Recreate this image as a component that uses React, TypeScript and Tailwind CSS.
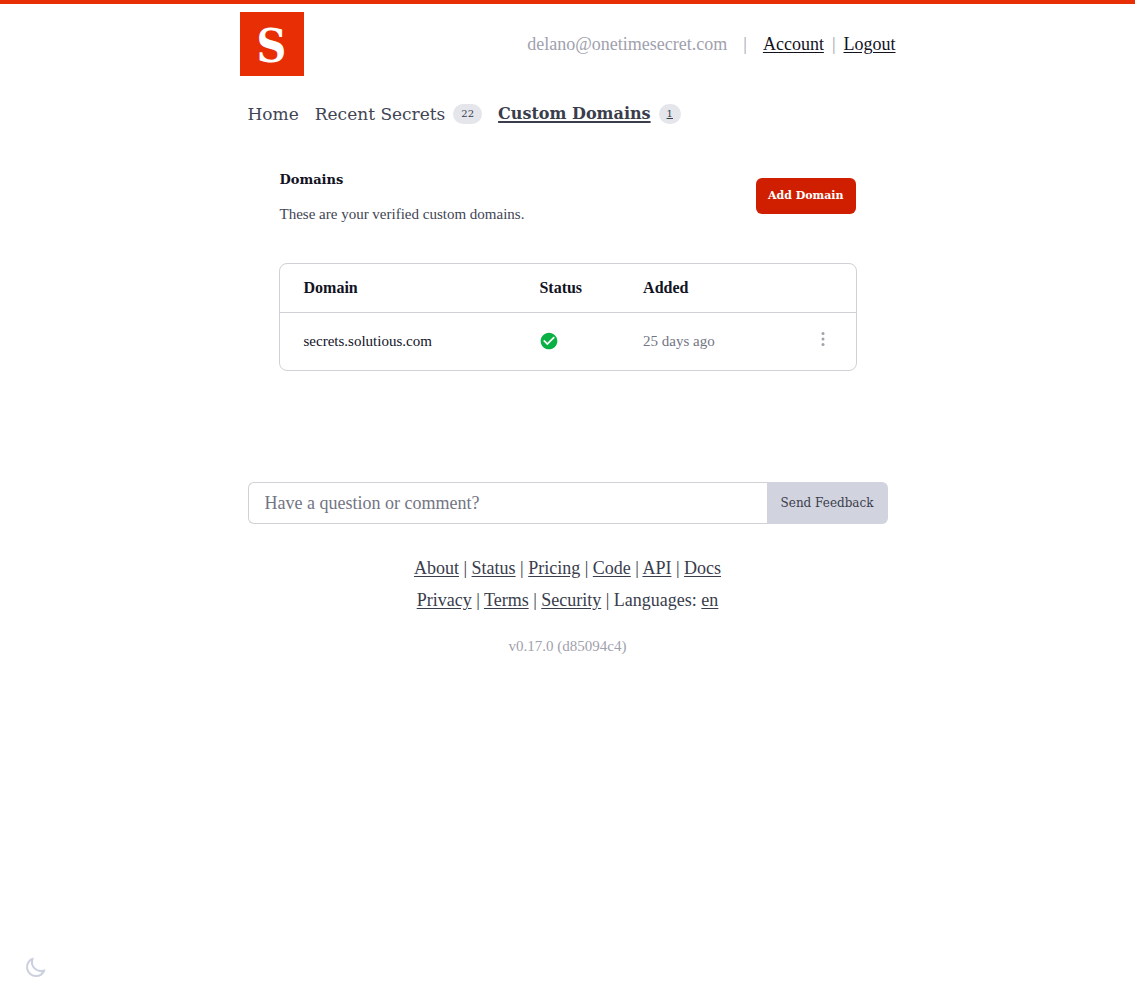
import React from "react";

const serif = "font-['Liberation_Serif',serif]";
const slab = "font-['DejaVu_Serif',serif]";
const narrowSlab = "font-['DejaVu_Serif_Condensed','DejaVu_Serif',serif]";

type Item = { label: string; href: string };

const primaryLinks: Item[] = [
  { label: "About", href: "#about" },
  { label: "Status", href: "#status" },
  { label: "Pricing", href: "#pricing" },
  { label: "Code", href: "#code" },
  { label: "API", href: "#api" },
  { label: "Docs", href: "#docs" },
];

const legalLinks: Item[] = [
  { label: "Privacy", href: "#privacy" },
  { label: "Terms", href: "#terms" },
  { label: "Security", href: "#security" },
];

const domains = [{ name: "secrets.solutious.com", added: "25 days ago" }];

function Logo() {
  return (
    <a
      href="#home"
      aria-label="Onetime Secret"
      className={`flex size-16 items-center justify-center bg-[#e82e05] pt-1 text-[46px] leading-none font-bold text-white ${narrowSlab}`}
    >
      S
    </a>
  );
}

function Header() {
  return (
    <header className="flex items-center justify-between">
      <Logo />
      <div className="flex items-center text-lg text-[#9fa1ad]">
        <span>delano@onetimesecret.com</span>
        <span className="mx-4">|</span>
        <a href="#account" className="text-[#12131f] underline underline-offset-2">
          Account
        </a>
        <span className="mx-2">|</span>
        <a href="#logout" className="text-[#12131f] underline underline-offset-2">
          Logout
        </a>
      </div>
    </header>
  );
}

function Badge({ children }: { children: React.ReactNode }) {
  return (
    <span className={`rounded-full bg-[#e5e6eb] px-2 text-[10px] leading-5 text-[#393d4c] ${slab}`}>
      {children}
    </span>
  );
}

function Nav() {
  return (
    <nav className={`mt-6 flex items-center gap-4 px-2 text-[17px] leading-7 text-[#414554] ${slab}`}>
      <a href="#home">Home</a>
      <a href="#recent" className="flex items-center gap-2">
        Recent Secrets <Badge>22</Badge>
      </a>
      <a href="#domains" aria-current="page" className="flex items-center gap-2 text-base leading-7 text-[#393d4c]">
        <span className="font-bold underline decoration-2 underline-offset-2">Custom Domains</span>
        <Badge>
          <span className="underline">1</span>
        </Badge>
      </a>
    </nav>
  );
}

function DomainsTable() {
  return (
    <div className="-mx-px mt-[35px] overflow-hidden rounded-lg border border-[#d0d1d6]">
      <table className="w-full table-fixed text-left text-base">
        <colgroup>
          <col className="w-[42%]" />
          <col className="w-[18%]" />
          <col className="w-[27%]" />
          <col />
        </colgroup>
        <thead>
          <tr className="h-12 border-b border-[#d0d1d6] text-[#12131f]">
            <th scope="col" className="pl-6">Domain</th>
            <th scope="col" className="pl-[18px]">Status</th>
            <th scope="col" className="pl-[18px]">Added</th>
            <th scope="col" aria-label="Actions" />
          </tr>
        </thead>
        <tbody>
          {domains.map((d) => (
            <tr key={d.name} className="h-[58px] text-[15px]">
              <td className="pl-6 text-[#12131f]">{d.name}</td>
              <td className="pl-[18px]">
                <svg viewBox="0 0 24 24" className="size-5" role="img" aria-label="Verified">
                  <path
                    fill="#09b043"
                    d="M12 2C6.5 2 2 6.5 2 12s4.500 10 10 10 10-4.500 10-10S17.500 2 12 2m-2 15-5-5 1.410-1.410L10 14.170l7.590-7.590L19 8z"
                  />
                </svg>
              </td>
              <td className="pl-[18px] text-[#737584]">{d.added}</td>
              <td>
                <button type="button" aria-label="Domain options" className="mb-1 ml-8 flex size-5 items-center justify-center align-middle">
                  <svg viewBox="0 0 20 20" fill="#9fa1ad" className="size-5">
                    <circle cx="10" cy="4.500" r="1.500" />
                    <circle cx="10" cy="10" r="1.500" />
                    <circle cx="10" cy="15.500" r="1.500" />
                  </svg>
                </button>
              </td>
            </tr>
          ))}
        </tbody>
      </table>
    </div>
  );
}

function Links({ items }: { items: Item[] }) {
  return (
    <>
      {items.map((item, i) => (
        <React.Fragment key={item.label}>
          {i > 0 && " | "}
          <a href={item.href} className="underline underline-offset-2">
            {item.label}
          </a>
        </React.Fragment>
      ))}
    </>
  );
}

export default function App() {
  return (
    <div className={`min-h-screen border-t-4 border-[#e82e05] bg-white ${serif}`}>
      <div className="mx-auto max-w-2xl p-2">
        <Header />
        <Nav />
        <main className="px-10 pt-10">
          <div className="flex items-start justify-between">
            <div>
              <h1 className={`text-[13px] leading-6 font-bold text-[#12131f] ${slab}`}>Domains</h1>
              <p className="mt-2 text-[15px] leading-7 text-[#414554]">These are your verified custom domains.</p>
            </div>
            <button type="button" className={`mt-2.5 h-9 rounded-md bg-[#cf1f00] px-3 text-[11px] font-bold text-white ${slab}`}>
              Add Domain
            </button>
          </div>
          <DomainsTable />
        </main>
        <footer className="mt-[111px] px-2 text-center text-lg text-[#393d4c]">
          <form className="flex h-[42px]" onSubmit={(e) => e.preventDefault()}>
            <input
              type="text"
              aria-label="Feedback"
              placeholder="Have a question or comment?"
              className="min-w-0 flex-1 rounded-l-md border border-r-0 border-[#d0d1d6] px-4 placeholder:text-[#737584]"
            />
            <button type="submit" className={`rounded-r-md bg-[#d1d3de] px-3.5 text-xs ${slab}`}>
              Send Feedback
            </button>
          </form>
          <div className="mt-7 leading-8">
            <div>
              <Links items={primaryLinks} />
            </div>
            <div>
              <Links items={legalLinks} /> | Languages:{" "}
              <a href="#en" className="underline underline-offset-2">en</a>
            </div>
          </div>
          <p className="mt-[18px] text-[15px] leading-6 text-[#9fa1ad]">v0.17.0 (d85094c4)</p>
        </footer>
      </div>
      <button type="button" aria-label="Switch to dark mode" className="fixed bottom-6 left-6 text-[#cbd0df]">
        <svg viewBox="0 0 24 24" fill="none" stroke="currentColor" strokeWidth="2" strokeLinecap="round" strokeLinejoin="round" className="size-6">
          <path d="M20.354 15.354A9 9 0 0 1 8.646 3.646 9.003 9.003 0 0 0 12 21a9.003 9.003 0 0 0 8.354-5.646z" />
        </svg>
      </button>
    </div>
  );
}
